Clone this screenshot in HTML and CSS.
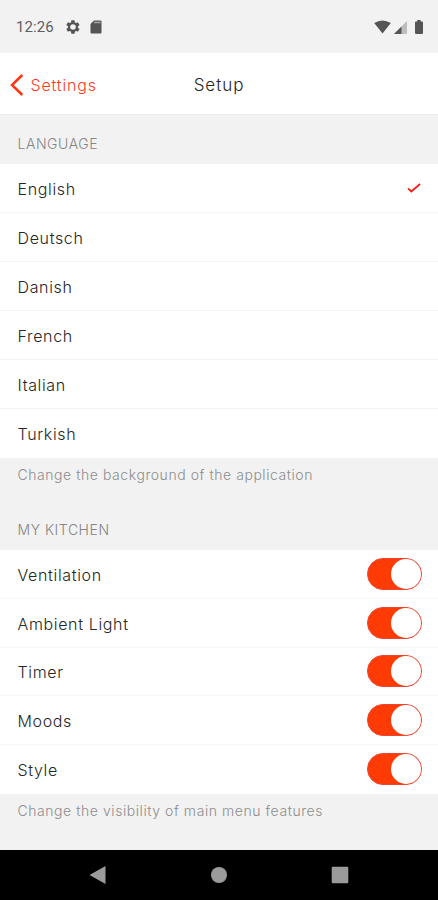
FILE: index.html
```html
<!DOCTYPE html>
<html lang="en">
<head>
<meta charset="utf-8">
<title>Setup</title>
<link rel="stylesheet" href="styles.css">
</head>
<body>
<div class="screen">
  <div class="status">
    <span class="clock">12:26</span>
    <svg class="gear" width="16" height="16" viewBox="0 0 24 24"><path fill-rule="evenodd" d="M19.4 13c.1-.3.1-.7.1-1s0-.7-.1-1l2.1-1.600c.2-.2.3-.4.1-.7l-2-3.400c-.1-.2-.4-.3-.6-.2l-2.500 1a7 7 0 0 0-1.700-1l-.4-2.700a.5.5 0 0 0-.5-.4h-4a.5.5 0 0 0-.5.4L9 5.100a7 7 0 0 0-1.700 1l-2.500-1c-.2-.1-.5 0-.6.2l-2 3.400c-.2.3-.1.5.1.7L4.500 11a8 8 0 0 0 0 2l-2.200 1.600c-.2.2-.3.4-.1.7l2 3.400c.1.2.4.3.6.2l2.500-1a7 7 0 0 0 1.700 1l.4 2.700c0 .2.2.4.5.4h4c.2 0 .5-.2.5-.4l.4-2.700a7 7 0 0 0 1.700-1l2.500 1c.2.1.5 0 .6-.2l2-3.400c.1-.3.1-.5-.1-.7zM12 16.200a4.200 4.200 0 1 1 0-8.400 4.200 4.200 0 0 1 0 8.400z"/></svg>
    <svg class="card" width="12" height="14" viewBox="0 0 12 14"><path d="M4 .5h6.500q1 0 1 1v11q0 1-1 1h-9q-1 0-1-1V4z"/><path class="pins" d="M4 2.500h6.500"/></svg>
    <span class="spacer"></span>
    <svg width="17" height="14" viewBox="0 0 17 14"><path d="M.2 3Q8.500-2 16.800 3L8.500 13.500z"/></svg>
    <svg class="signal" width="13" height="13" viewBox="0 0 13 13"><path class="dim" d="M13 0v13H0z"/><path d="M7.500 5.500V13H0z"/></svg>
    <svg class="battery" width="8" height="14" viewBox="0 0 8 14"><path d="M2.300 0h3.400v1.500H7q1 0 1 1V13q0 1-1 1H1q-1 0-1-1V2.500q0-1 1-1h1.300z"/></svg>
  </div>
  <header class="header">
    <div class="back"><svg width="14" height="22" viewBox="0 0 14 22"><path d="M12.300 1L2 11l10.300 10"/></svg><span>Settings</span></div>
    <h1 class="title">Setup</h1>
  </header>
  <h2 class="label">LANGUAGE</h2>
  <ul class="list languages">
    <li>English<svg width="14" height="10" viewBox="0 0 14 10"><path d="M1 5.300l3.300 3.200L13 1"/></svg></li>
    <li>Deutsch</li>
    <li>Danish</li>
    <li>French</li>
    <li>Italian</li>
    <li>Turkish</li>
  </ul>
  <p class="note">Change the background of the application</p>
  <h2 class="label">MY KITCHEN</h2>
  <ul class="list features">
    <li>Ventilation<span class="switch"></span></li>
    <li>Ambient Light<span class="switch"></span></li>
    <li>Timer<span class="switch"></span></li>
    <li>Moods<span class="switch"></span></li>
    <li>Style<span class="switch"></span></li>
  </ul>
  <p class="note visibility">Change the visibility of main menu features</p>
  <nav class="nav">
    <svg width="18" height="20" viewBox="0 0 18 20"><path d="M16.500 1v18L.5 10z"/></svg>
    <svg width="18" height="20" viewBox="0 0 18 20"><circle cx="9" cy="10" r="8"/></svg>
    <svg width="18" height="20" viewBox="0 0 18 20"><rect x=".7" y="1.800" width="16.600" height="16.400" rx="1"/></svg>
  </nav>
</div>
</body>
</html>
```
FILE: styles.css
```css
* { box-sizing: border-box; margin: 0; padding: 0; }
body { background: #f2f2f2; font-family: Inter, sans-serif; color: #262626; }
.screen { width: 438px; height: 900px; display: flex; flex-direction: column; overflow: hidden; }
.status { height: 53px; flex: none; display: flex; align-items: center; padding: 1px 15px 0 16px; fill: #555; }
.clock { font: 400 15px Roboto, sans-serif; color: #606060; width: 49px; letter-spacing: .1px; }
.card { margin: 0 0 1px 9px; }
.pins { stroke: #a5a5a5; stroke-width: 1.500; }
.spacer { flex: 1; }
.signal { margin: 1px 8px 0 3px; }
.dim { fill: #bdbdbd; }
.header { height: 62px; flex: none; background: #fff; border-bottom: 1px solid #ececec; display: grid; grid-template-columns: 1fr auto 1fr; align-items: center; padding: 3px 10px 0; }
.back { display: flex; align-items: center; gap: 6.500px; color: #ff3b26; font-size: 16px; font-weight: 300; letter-spacing: .85px; }
.back svg { fill: none; stroke: #ff3510; stroke-width: 2.500; }
.title { font-size: 17px; font-weight: 300; letter-spacing: .95px; }
.label { height: 49px; flex: none; padding: 19px 17.500px 0; font-size: 14px; line-height: 20px; font-weight: 300; color: #858585; letter-spacing: .55px; }
.list { list-style: none; flex: none; background: #fff; display: grid; }
.languages { height: 294px; grid-template-rows: repeat(6, 1fr); }
.features { height: 244px; grid-template-rows: repeat(5, 1fr); }
.list li { display: flex; align-items: center; justify-content: space-between; padding: 2px 16px 0 17.500px; border-bottom: 1px solid #f4f4f4; font-size: 16px; font-weight: 300; letter-spacing: .65px; }
.list li:last-child { border-bottom-color: transparent; }
.features li { border-bottom-color: #f8f8f8; }
.languages svg { fill: none; stroke: #f5201b; stroke-width: 1.800; margin: 0 1px 3px 0; }
.switch { width: 55px; height: 32px; border: 1px solid #f04432; border-radius: 16px; background: #ff3b05; display: flex; justify-content: flex-end; margin-bottom: 2px; }
.switch::before { content: ""; width: 30px; height: 30px; border-radius: 50%; background: #fff; }
.note { flex: none; height: 43px; padding: 7px 17.500px 0; font-size: 14px; line-height: 20px; font-weight: 300; color: #8d8d8d; letter-spacing: .56px; }
.visibility { height: 56px; }
.nav { flex: none; height: 50px; background: #000; display: flex; justify-content: center; align-items: center; gap: 103px; fill: #9b9b9b; }
```
